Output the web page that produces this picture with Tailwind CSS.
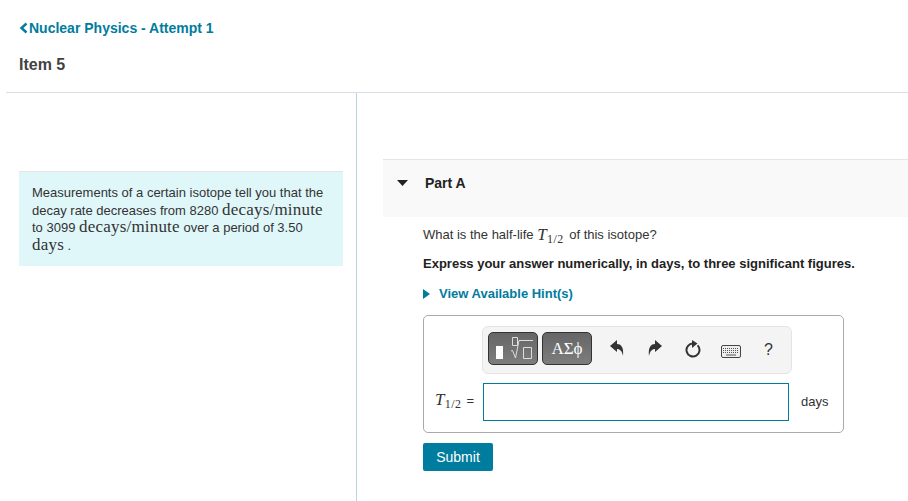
<!DOCTYPE html>
<html lang="en">
  <head>
    <meta charset="UTF-8" />
    <meta name="viewport" content="width=device-width, initial-scale=1.0" />
    <title>Item 5</title>
    <script src="https://cdn.jsdelivr.net/npm/@tailwindcss/browser@4"></script>
  </head>
  <body class="h-[501px] w-[908px] overflow-hidden bg-white font-['Liberation_Sans',Arial,sans-serif] text-[#333]">

    <!-- header -->
    <div class="ml-[6px] h-[93px] border-b border-[#d9dfe3] pl-[13px] pt-[19px]">
      <a class="flex h-[18px] items-center text-[14px] font-bold text-[#007c9e]">
        <svg width="10" height="12" viewBox="0 0 10 12"><path d="M7.500 1.500 2.500 6l5 4.500" fill="none" stroke="#007c9e" stroke-width="2.400"/></svg>
        Nuclear Physics - Attempt 1
      </a>
      <h1 class="mt-[18px] text-[16px] leading-[20px] font-bold text-[#424242]">Item 5</h1>
    </div>

    <div class="flex h-[408px]">
      <!-- left column -->
      <div class="w-[357px] shrink-0 border-r border-[#b9d3e2] pl-[19px] pt-[78px]">
        <div class="h-[95px] w-[324px] border-t border-[#e5e5e5] bg-[#e0f7fa] px-[13px] pt-[12px] text-[13px] leading-[17.700px] text-[#333]">
          Measurements of a certain isotope tell you that the decay rate decreases from 8280 <span class="inline-block font-['Liberation_Serif',serif] text-[17px] leading-[13px] tracking-[0.2px]">decays/minute</span> to 3099 <span class="inline-block font-['Liberation_Serif',serif] text-[17px] leading-[13px] tracking-[0.2px]">decays/minute</span> over a period of 3.50 <span class="inline-block font-['Liberation_Serif',serif] text-[17px] leading-[13px] tracking-[0.2px]">days</span> .
        </div>
      </div>

      <!-- right column -->
      <div class="min-w-0 grow pl-[26px] pt-[66px]">
        <div class="flex h-[58px] border-t border-[#e5e5e5] bg-[#f9f9f9] pl-[14px] pt-[14px]">
          <svg class="mt-[6px]" width="11" height="6" viewBox="0 0 11 6"><path d="M0 0h11L5.500 6z" fill="#222"/></svg>
          <h2 class="ml-[17px] text-[14px] leading-[18px] font-bold text-[#222]">Part A</h2>
        </div>

        <div class="pl-[40px]">
          <p class="mt-[8px] flex h-[20px] items-center text-[13px] text-[#333]">
            What is the half-life&nbsp;<span class="mr-[2px] font-['Liberation_Serif',serif] text-[17px] italic tracking-[0.4px]">T<sub class="text-[12px] not-italic">1/2</sub></span>&nbsp;of this isotope?
          </p>
          <p class="mt-[9px] text-[13px] leading-[20px] font-bold text-[#222]">Express your answer numerically, in days, to three significant figures.</p>
          <div class="mt-[10px] flex h-[20px] items-center text-[13px] font-bold text-[#007c9e]">
            <svg width="7" height="10" viewBox="0 0 7 10"><path d="M0 0l7 5-7 5z" fill="#007c9e"/></svg>
            <span class="ml-[9px]">View Available Hint(s)</span>
          </div>

          <!-- answer box -->
          <div class="mt-[11px] h-[118px] w-[421px] rounded-[5px] border border-[#aaa]">
            <div class="mt-[10px] ml-[58px] flex h-[48px] w-[310px] items-center rounded-[6px] border border-[#e4e4e4] bg-[#f4f4f4] pl-[5px]">
              <div class="relative mb-[3px] h-[33px] w-[50px] rounded-[5px] border border-[#333] bg-gradient-to-b from-[#666] to-[#7d7d7d]">
                <span class="absolute top-[13px] left-[7px] h-[13px] w-[7px] bg-white"></span>
                <svg class="absolute top-[4px] left-[20px]" width="26" height="24" viewBox="0 0 26 24"><path d="M2 14l1.500-.5L6.500 21 10 3.500h14" fill="none" stroke="#ddd"/><path d="M3.500.500h5v8h-5zM14.500 10.500h8v11h-8z" fill="none" stroke="#ddd"/></svg>
              </div>
              <div class="mb-[3px] ml-[4px] flex h-[33px] w-[50px] items-center justify-center rounded-[5px] border border-[#333] bg-gradient-to-b from-[#666] to-[#7d7d7d] font-['Liberation_Serif',serif] text-[17px] text-white">ΑΣϕ</div>
              <svg class="mb-[4px] ml-[18px]" width="14" height="16" viewBox="0 0 14 16"><path d="M0 6 7 0v4c4 0 7 3 6 12-1-5-3-7-6-7v3z" fill="#333"/></svg>
              <svg class="mb-[4px] ml-[24px]" width="14" height="16" viewBox="0 0 14 16"><path d="M14 6 7 0v4C3 4 0 7 1 16c1-5 3-7 6-7v3z" fill="#333"/></svg>
              <svg class="mb-[2px] ml-[23px]" width="16" height="18" viewBox="0 0 16 18"><path d="M8 3.500A6.500 6.500 0 1 0 12.600 5.400" fill="none" stroke="#333" stroke-width="2"/><path d="M7 0v8l5.500-4.500z" fill="#333"/></svg>
              <svg class="mt-[3px] ml-[20px]" width="20" height="13" viewBox="0 0 20 13"><rect x=".5" y=".5" width="19" height="12" rx="1.500" fill="#eee" stroke="#444"/><path d="M2 3.500h16M2 5.500h16M2 7.500h16" stroke="#555" stroke-dasharray="1 1"/><path d="M5 10h10" stroke="#555"/></svg>
              <span class="ml-[23px] text-[16px] text-[#333]">?</span>
            </div>
            <div class="mt-[9px] flex items-center">
              <span class="mb-[4px] ml-[11px] w-[48px] text-[13px] text-[#333]"><span class="font-['Liberation_Serif',serif] text-[17px] italic tracking-[0.4px]">T<sub class="text-[12px] not-italic">1/2</sub></span><span class="ml-[5px]">=</span></span>
              <input type="text" class="h-[38px] w-[306px] border border-[#007c9e] bg-white" />
              <span class="ml-[12px] text-[13px] text-[#333]">days</span>
            </div>
          </div>

          <button class="mt-[10px] h-[28px] w-[70px] rounded-[2px] bg-[#007c9e] text-[14px] text-white">Submit</button>
        </div>
      </div>
    </div>

  </body>
</html>
